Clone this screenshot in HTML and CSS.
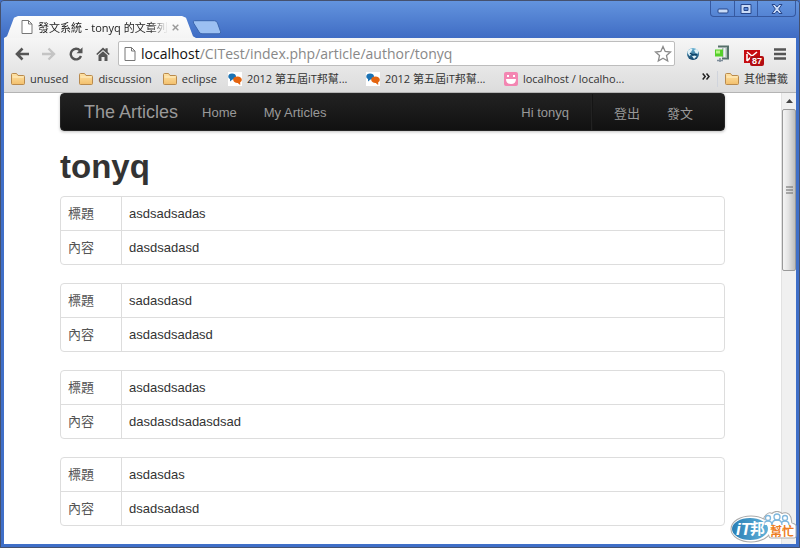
FILE: index.html
```html
<!DOCTYPE html>
<html lang="zh-Hant">
<head>
    <meta charset="UTF-8">
    <meta name="viewport" content="width=device-width, initial-scale=1.0">
    <title>發文系統 - tonyq 的文章列表</title>
    <link rel="stylesheet" href="styles.css">
</head>
<body>
    <!-- shared icons -->
    <svg class="sprite" aria-hidden="true">
        <defs>
            <linearGradient id="folderFill" x1="0" y1="0" x2="0" y2="1">
                <stop offset="0" stop-color="#ffe3a6"/>
                <stop offset="1" stop-color="#f2bf6c"/>
            </linearGradient>
            <linearGradient id="globeFill" x1="0" y1="0" x2="0" y2="1">
                <stop offset="0" stop-color="#6fb6d6"/>
                <stop offset="1" stop-color="#0c3f66"/>
            </linearGradient>
            <linearGradient id="logoFill" x1="0" y1="0" x2="1" y2="0">
                <stop offset="0" stop-color="#2a7fb5"/>
                <stop offset="1" stop-color="#5fb0d8"/>
            </linearGradient>
        </defs>
        <symbol id="page" viewBox="0 0 12 14">
            <path d="M1 .5h6.500L11 4v9.500H1z" fill="#fff" stroke="#777"/>
            <path d="M7.500.5V4H11" fill="none" stroke="#777"/>
        </symbol>
        <symbol id="folder" viewBox="0 0 14 12">
            <path d="M.5 10.500v-9q0-1 1-1h4l1.500 2h5.500q1 0 1 1v7q0 1-1 1h-11q-1 0-1-1z" fill="url(#folderFill)" stroke="#b98a4d"/>
            <path d="M1.500 4h11" stroke="#fff0c8"/>
        </symbol>
        <symbol id="chat" viewBox="0 0 14 14">
            <path d="M0 0h14v14H0z" fill="#fff"/>
            <path d="M4 1.500c2.500 0 4 1 4 3s-1.500 3-3.500 3L2 9.500V7C.8 6.500.3 5.700.3 4.500.3 2.500 1.800 1.500 4 1.500z" fill="#1c73b4"/>
            <path d="M9.500 4.500c2.500 0 4.300 1.300 4.300 3.200 0 1.300-.6 2-1.600 2.600v2.600l-2.500-2c-2.700 0-4.500-1.200-4.500-3.200s1.800-3.200 4.300-3.200z" fill="#e4640f"/>
        </symbol>
    </svg>

    <header class="titlebar">
        <div class="tab">
            <svg class="tab-icon" width="12" height="14"><use href="#page"/></svg>
            <span class="tab-title">發文系統 - tonyq 的文章列</span>
            <button class="tab-close" aria-label="Close tab">
                <svg width="7" height="7" viewBox="0 0 7 7"><path d="M.7.7l5.600 5.600M6.300.7L.7 6.300" stroke="#999" stroke-width="1.400"/></svg>
            </button>
        </div>
        <button class="new-tab" aria-label="New tab">
            <svg width="30" height="15" viewBox="0 0 30 15"><path d="M2.500.7h20q2 0 3 2.300l3 8.500q.7 2.300-1.500 2.300H10q-2 0-3-2L1.500 3Q.7.700 2.500.7z" fill="#9cc0f2" stroke="#3c66ad"/></svg>
        </button>
        <div class="window-controls">
            <button class="control" aria-label="Minimize"><svg width="12" height="12" viewBox="0 0 12 12"><rect x="1" y="6" width="10" height="4" rx="1" fill="#c9dbf7" stroke="#27468a"/></svg></button>
            <button class="control" aria-label="Maximize"><svg width="12" height="12" viewBox="0 0 12 12"><path d="M1 1.500h10v9H1zM4 4.500h4v3H4z" fill="#c9dbf7" fill-rule="evenodd" stroke="#27468a"/></svg></button>
            <button class="control control-close" aria-label="Close"><svg width="12" height="12" viewBox="0 0 12 12"><path d="M1 1.500h3L6 4l2-2.500h3L7.700 6l3.300 4.500H8L6 8l-2 2.500H1L4.300 6z" fill="#c9dbf7" stroke="#27468a"/></svg></button>
        </div>
    </header>

    <div class="toolbar">
        <button class="tool" aria-label="Back">
            <svg width="14" height="14" viewBox="0 0 14 14"><path d="M7.500 1.500L2 7l5.500 5.500M2.500 7H14" fill="none" stroke="#555" stroke-width="2.600"/></svg>
        </button>
        <button class="tool" aria-label="Forward">
            <svg width="14" height="14" viewBox="0 0 14 14"><path d="M6.500 1.500L12 7l-5.500 5.500M11.500 7H0" fill="none" stroke="#c4c4c4" stroke-width="2.400"/></svg>
        </button>
        <button class="tool" aria-label="Reload">
            <svg width="14" height="14" viewBox="0 0 14 14"><path d="M11 3.500A5.300 5.300 0 1 0 12 9" fill="none" stroke="#555" stroke-width="2.400"/><path d="M13.500.3v6H7.500z" fill="#555"/></svg>
        </button>
        <button class="tool" aria-label="Home">
            <svg width="14" height="14" viewBox="0 0 14 14"><path d="M7 .5l2.500 2.300V1.200h2.200v3.700L13.800 7l-1.100 1L7 2.900 1.300 8 .2 7z" fill="#555"/><path d="M2.500 8.200L7 4.200l4.500 4V14H8.500v-4h-3v4h-3z" fill="#555"/></svg>
        </button>
        <div class="omnibox">
            <svg width="12" height="14"><use href="#page"/></svg>
            <a class="url" href="#"><span class="url-host">localhost</span>/CITest/index.php/article/author/tonyq</a>
            <button class="star" aria-label="Bookmark this page">
                <svg width="18" height="18" viewBox="0 0 18 18"><path d="M9 1.500l2.200 5 5.300.5-4 3.600 1.200 5.400L9 13.200 4.300 16l1.200-5.400L1.500 7l5.300-.5z" fill="#fff" stroke="#8a8a8a" stroke-width="1.300"/></svg>
            </button>
        </div>
        <div class="extensions">
            <button class="extension" aria-label="Globe">
                <svg width="14" height="14" viewBox="0 0 14 14"><circle cx="7" cy="7" r="6" fill="url(#globeFill)"/><path d="M2 3.500l3-2 1.500 1L5 5l.5 2-2 2L1.500 6zM8 3l2.500-1 2 2-1 3-2-1zM6 9l2.500-1 2 1.500L8 12z" fill="#e0f1f8"/><path d="M4 6l3 2 4-.5" stroke="#0b4166" stroke-width="1.500" fill="none"/></svg>
            </button>
            <button class="extension" aria-label="Archive">
                <svg width="16" height="18" viewBox="0 0 16 18"><path d="M4 1.500h10v12H8M14 1.500v12" fill="none" stroke="#56706a" stroke-width="2"/><path d="M8 3h5v9H8z" fill="#a9bbb4"/><path d="M10.500 3v9" stroke="#eef3f0" stroke-width="2"/><path d="M1 4.500h8v7H1z" fill="#55cf2a"/><path d="M2 5.500h4v3H2z" fill="#b8f589"/><path d="M6 13v4M3 15.500h6" stroke="#7d8d9a" stroke-width="1.500"/></svg>
            </button>
            <button class="extension mail" aria-label="Mail, 87 unread">
                <svg width="16" height="13" viewBox="0 0 16 13"><path d="M0 0h16v13H0z" fill="#c60c12"/><path d="M3 2l5 4 5-4M3 11V4M3 11l4-4" fill="none" stroke="#fff" stroke-width="1.600"/></svg>
                <span class="mail-badge">87</span>
            </button>
            <button class="extension" aria-label="Menu">
                <svg width="12" height="12" viewBox="0 0 12 12"><path d="M0 1.500h12M0 6h12M0 10.500h12" stroke="#555" stroke-width="2.500"/></svg>
            </button>
        </div>
    </div>

    <nav class="bookmarks" aria-label="Bookmarks">
        <a href="#" class="bookmark"><svg width="14" height="12"><use href="#folder"/></svg>unused</a>
        <a href="#" class="bookmark"><svg width="14" height="12"><use href="#folder"/></svg>discussion</a>
        <a href="#" class="bookmark"><svg width="14" height="12"><use href="#folder"/></svg>eclipse</a>
        <a href="#" class="bookmark bookmark-wide"><svg width="14" height="14"><use href="#chat"/></svg>2012 第五屆iT邦幫...</a>
        <a href="#" class="bookmark bookmark-wide"><svg width="14" height="14"><use href="#chat"/></svg>2012 第五屆iT邦幫...</a>
        <a href="#" class="bookmark bookmark-wide">
            <svg width="14" height="14" viewBox="0 0 14 14"><rect width="14" height="14" rx="2" fill="#f386b2"/><path d="M2 7h10q0 5-5 5T2 7zM3 3h2v2H3zM9 3h2v2H9z" fill="#fff"/></svg>localhost / localho...
        </a>
        <button class="more" aria-label="More bookmarks">
            <svg width="8" height="7" viewBox="0 0 8 7"><path d="M.7.5l2.500 3-2.500 3M4.500.5l2.500 3-2.500 3" fill="none" stroke="#222" stroke-width="1.500"/></svg>
        </button>
        <a href="#" class="bookmark other"><svg width="14" height="12"><use href="#folder"/></svg>其他書籤</a>
    </nav>

    <div class="viewport">
        <main class="page">
            <div class="container">
                <nav class="navbar">
                    <a class="brand" href="#">The Articles</a>
                    <a class="nav-link" href="#">Home</a>
                    <a class="nav-link" href="#">My Articles</a>
                    <span class="nav-text">Hi tonyq</span>
                    <a class="nav-link" href="#">登出</a>
                    <a class="nav-link" href="#">發文</a>
                </nav>
                <h1>tonyq</h1>
                <table class="article">
                    <tr><th scope="row">標題</th><td>asdsadsadas</td></tr>
                    <tr><th scope="row">內容</th><td>dasdsadasd</td></tr>
                </table>
                <table class="article">
                    <tr><th scope="row">標題</th><td>sadasdasd</td></tr>
                    <tr><th scope="row">內容</th><td>asdasdsadasd</td></tr>
                </table>
                <table class="article">
                    <tr><th scope="row">標題</th><td>asdasdsadas</td></tr>
                    <tr><th scope="row">內容</th><td>dasdasdsadasdsad</td></tr>
                </table>
                <table class="article">
                    <tr><th scope="row">標題</th><td>asdasdas</td></tr>
                    <tr><th scope="row">內容</th><td>dsadsadasd</td></tr>
                </table>
            </div>
        </main>
        <div class="scrollbar">
            <svg class="scroll-arrow" width="7" height="4" viewBox="0 0 7 4"><path d="M0 4l3.500-4L7 4z" fill="#444"/></svg>
            <div class="scroll-thumb">
                <svg width="7" height="8" viewBox="0 0 7 8"><path d="M0 1h7M0 4h7M0 7h7" stroke="#666"/></svg>
            </div>
        </div>
    </div>

    <svg class="watermark" width="70" height="34" viewBox="0 0 70 34" role="img" aria-label="iT邦幫忙">
        <g stroke="#aaa" stroke-width="5" stroke-linejoin="round">
            <ellipse cx="22" cy="18" rx="18" ry="11"/>
            <path d="M37 7q3-5 6-2 5-5 10 0 5-3 7 2l1 6 4 2v10H42z"/>
        </g>
        <g fill="#fff" stroke="#fff" stroke-width="3" stroke-linejoin="round">
            <ellipse cx="22" cy="18" rx="18" ry="11"/>
            <path d="M37 7q3-5 6-2 5-5 10 0 5-3 7 2l1 6 4 2v10H42z"/>
        </g>
        <ellipse cx="21" cy="18" rx="18" ry="11" fill="url(#logoFill)"/>
        <g fill="#fff" stroke="#7fb7dd" stroke-width="1.300">
            <path d="M35 14q0-4 4-4t4 4M52 14q0-4 4-4t4 4"/>
            <circle cx="39" cy="7" r="2.500"/>
            <circle cx="56" cy="7" r="2.500"/>
            <path d="M43 14q0-5 5-5t5 5"/>
            <circle cx="48" cy="6" r="3"/>
        </g>
        <path d="M41 14h24v12H41z" fill="#fff"/>
        <text class="mark-it" x="7" y="24">iT</text>
        <text class="mark-bang" x="21" y="23">邦</text>
        <text class="mark-help" x="41" y="25">幫忙</text>
    </svg>
</body>
</html>
```
FILE: styles.css
```css
* {
    margin: 0;
    padding: 0;
    box-sizing: border-box;
}

body {
    display: flex;
    flex-direction: column;
    height: 100vh;
    overflow: hidden;
    position: relative;
    border: 1px solid #45516e;
    border-radius: 4px 4px 0 0;
    padding: 0 3px 3px;
    background: #3f6fc8;
    font-family: "Open Sans", "Noto Sans CJK TC", sans-serif;
    font-size: 11px;
    color: #333;
}

button {
    border: none;
    background: none;
    display: flex;
    align-items: center;
    justify-content: center;
    cursor: pointer;
}

a {
    color: inherit;
    text-decoration: none;
}

svg {
    display: block;
    flex: none;
}

.sprite {
    position: absolute;
    width: 0;
    height: 0;
}

/* Title bar */
.titlebar {
    display: flex;
    align-items: flex-end;
    flex: none;
    height: 37px;
    margin: 0 -3px;
    padding: 0 3px;
    background: linear-gradient(#6394de, #3f6cc4);
}

.tab {
    display: flex;
    align-items: center;
    width: 192px;
    height: 22px;
    padding: 0 12px 0 17px;
    background: linear-gradient(#fdfdfd, #f4f4f4);
    clip-path: polygon(0 100%, 3px 92%, 10px 8%, 14px 0, 178px 0, 182px 8%, 189px 92%, 192px 100%);
}

.tab-icon {
    margin-right: 5px;
}

.tab-title {
    flex: none;
    white-space: nowrap;
    color: #222;
    -webkit-mask-image: linear-gradient(90deg, #000 86%, transparent);
    mask-image: linear-gradient(90deg, #000 86%, transparent);
}

.tab-close {
    width: 15px;
    height: 15px;
}

.new-tab {
    align-self: flex-end;
    margin: 0 0 3px -4px;
}

.window-controls {
    display: flex;
    align-self: flex-start;
    height: 16px;
    margin-left: auto;
    border: 1px solid #3659a0;
    border-top: none;
    border-radius: 0 0 4px 4px;
}

.control {
    width: 23px;
}

.control + .control {
    border-left: 1px solid #3659a0;
}

.control-close {
    width: 38px;
}

/* Toolbar */
.toolbar {
    display: flex;
    align-items: center;
    flex: none;
    height: 31px;
    padding: 0 10px 0 4px;
    background: linear-gradient(#f6f6f6, #e6e6e6);
}

.tool {
    width: 27px;
    height: 24px;
}

.omnibox {
    display: flex;
    align-items: center;
    flex: 1;
    height: 25px;
    margin-left: 2px;
    padding: 0 2px 0 5px;
    border: 1px solid #bdbdbd;
    border-radius: 2px;
    background: #fff;
}

.url {
    flex: 1;
    margin-left: 5px;
    font-size: 14px;
    color: #888;
}

.url-host {
    color: #111;
}

.extensions {
    display: flex;
    align-items: center;
    gap: 14px;
    margin-left: 11px;
}

.mail {
    position: relative;
    padding-top: 5px;
}

.mail-badge {
    position: absolute;
    left: 6px;
    bottom: -3px;
    padding: 0 2px;
    border-radius: 2px;
    background: #b30d12;
    color: #fff;
    font: bold 9px/10px "Liberation Sans", sans-serif;
}

/* Bookmarks bar */
.bookmarks {
    display: flex;
    align-items: center;
    flex: none;
    height: 24px;
    padding: 0 8px 3px 7px;
    border-bottom: 1px solid #b4b4b4;
    background: linear-gradient(#e6e6e6, #dcdcdc);
}

.bookmark {
    display: flex;
    align-items: center;
    gap: 5px;
    margin-right: 11px;
    line-height: 16px;
    white-space: nowrap;
}

.bookmark-wide {
    width: 127px;
}

.more {
    height: 15px;
    margin-left: auto;
    align-self: flex-start;
}

.other {
    margin: 0 0 0 7px;
    padding-left: 7px;
    border-left: 1px solid #d0d4dc;
}

/* Web page */
.viewport {
    display: flex;
    flex: 1;
    min-height: 0;
    background: #fff;
    font-family: "Liberation Sans", "Noto Sans CJK TC", sans-serif;
    font-size: 13px;
}

.page {
    flex: 1;
    padding: 0 56px;
    overflow: hidden;
}

.container {
    max-width: 940px;
    margin: 0 auto;
}

.navbar {
    display: flex;
    align-items: center;
    height: 38px;
    padding: 0 18px 0 10px;
    border: 1px solid #252525;
    border-radius: 4px;
    background: linear-gradient(#222, #111);
    box-shadow: 0 1px 3px rgba(0, 0, 0, 0.25);
    color: #999;
}

.brand {
    padding: 0 10px 0 13px;
    font-size: 18px;
}

.nav-link {
    padding: 0 13px 0 14px;
}

.nav-text {
    display: flex;
    align-items: center;
    align-self: stretch;
    margin-left: auto;
    margin-right: 8px;
    padding-right: 22px;
    border-right: 1px solid #222;
    box-shadow: 1px 0 0 #151515;
}

h1 {
    margin: 17px 0 10px;
    font-size: 33px;
    line-height: 38px;
}

.article {
    width: 100%;
    margin-bottom: 18px;
    border: 1px solid #ddd;
    border-radius: 4px;
    border-spacing: 0;
    table-layout: fixed;
}

.article th,
.article td {
    height: 33px;
    padding: 0 7px;
    line-height: 18px;
    text-align: left;
    font-weight: normal;
}

.article th {
    width: 60px;
    color: #555;
}

.article td {
    border-left: 1px solid #ddd;
}

.article tr + tr th,
.article tr + tr td {
    height: 34px;
    border-top: 1px solid #ddd;
}

/* Scrollbar */
.scrollbar {
    display: flex;
    flex-direction: column;
    align-items: center;
    width: 15px;
    border-left: 1px solid #e2e2e2;
    background: #f0f0f0;
}

.scroll-arrow {
    margin: 6px 0;
}

.scroll-thumb {
    display: flex;
    align-items: center;
    justify-content: center;
    width: 100%;
    height: 36%;
    border: 1px solid #999;
    border-radius: 2px;
    background: linear-gradient(90deg, #f5f5f5, #e3e3e3 45%, #bdbdbd);
}

/* Site logo over the corner */
.watermark {
    position: absolute;
    right: 0;
    bottom: 2px;
}

.mark-it {
    font: italic bold 17px "Liberation Sans", sans-serif;
    fill: #fff;
}

.mark-bang {
    font: bold 15px "Noto Sans CJK TC", sans-serif;
    fill: #fff;
}

.mark-help {
    font: bold 12px "Noto Sans CJK TC", sans-serif;
    fill: #ee7d22;
}
```
